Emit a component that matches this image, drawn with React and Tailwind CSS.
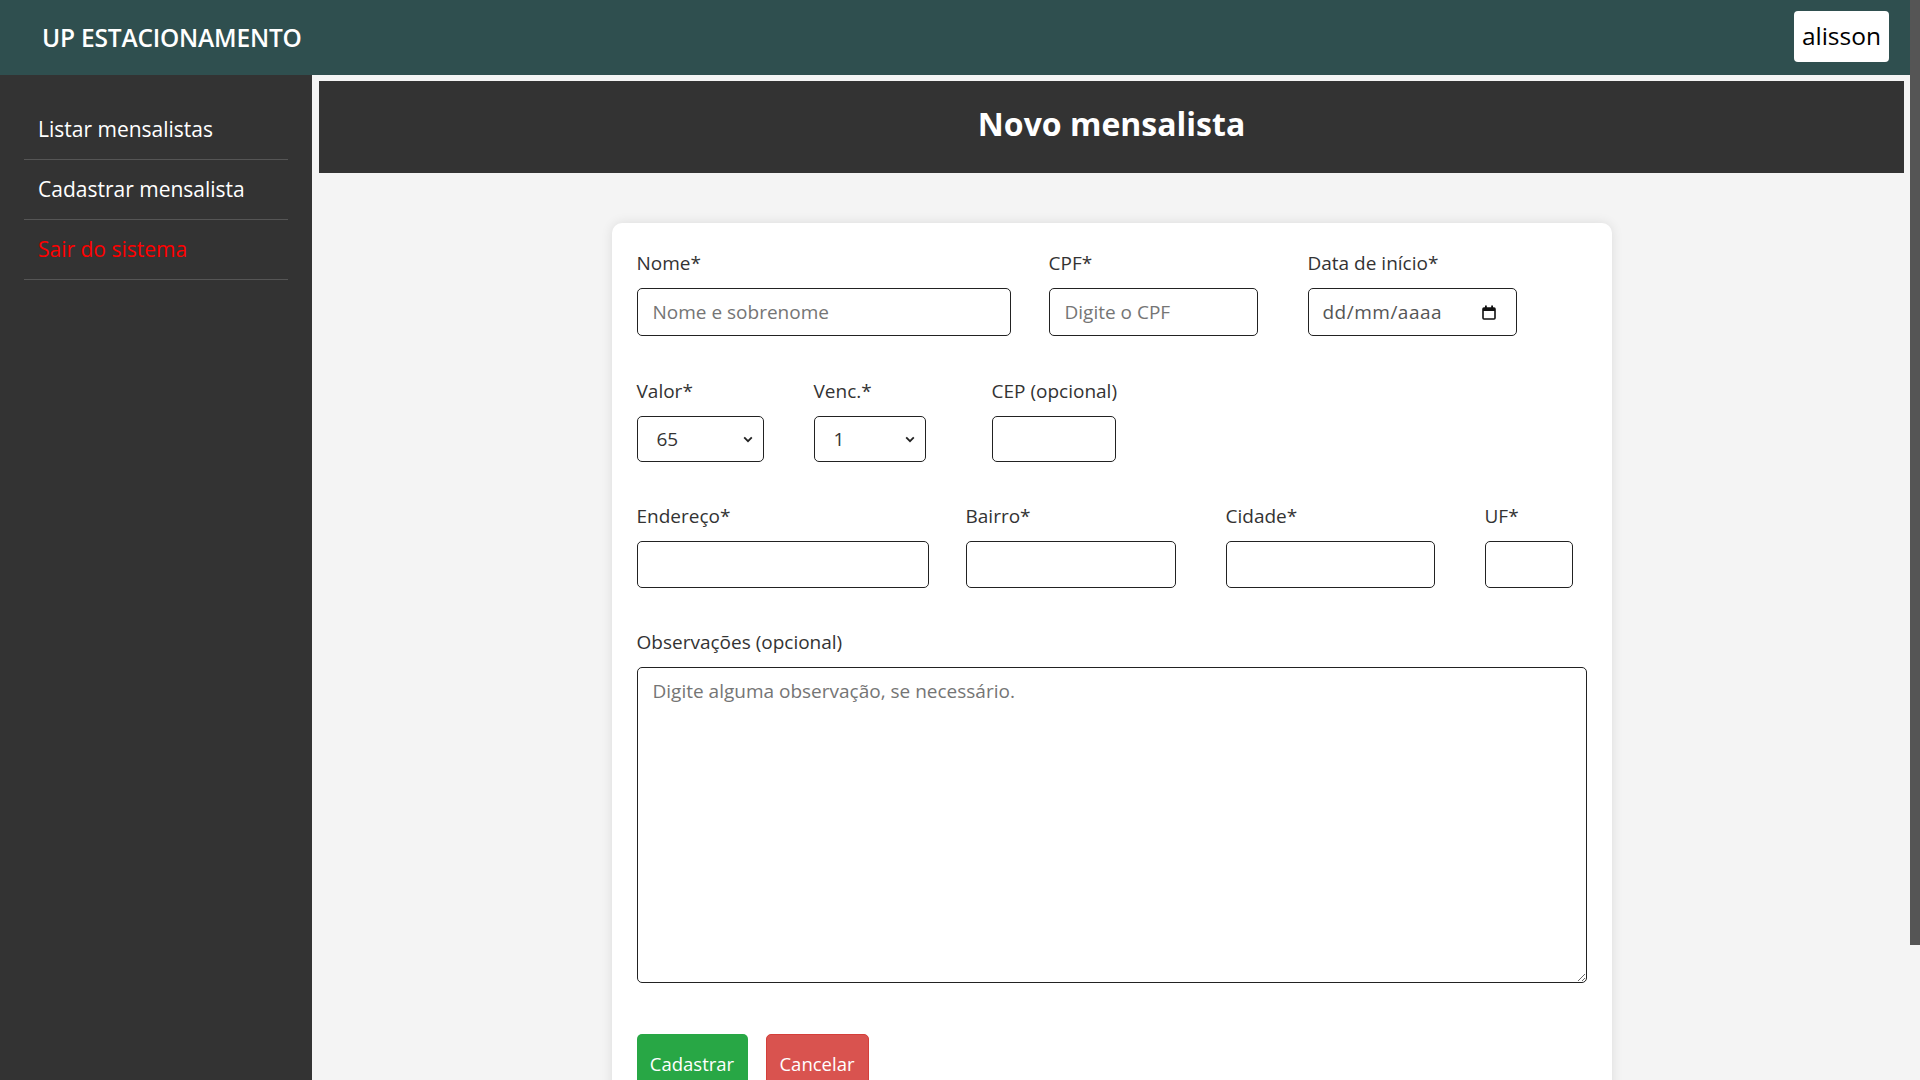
import { useState } from 'react'

const menu = [
  { label: 'Listar mensalistas', color: 'text-white' },
  { label: 'Cadastrar mensalista', color: 'text-white' },
  { label: 'Sair do sistema', color: 'text-[#ff0000]' },
]

function Label({ children }) {
  return <label className="block whitespace-nowrap text-[19px] leading-[27px] text-[#333] mb-[11px]">{children}</label>
}

function TextInput({ placeholder, className = '' }) {
  return (
    <input
      type="text"
      placeholder={placeholder}
      className={`block w-full border border-[#222] rounded-[5px] bg-white px-[15px] text-[19px] text-[#333] placeholder:text-[#757575] outline-none ${className}`}
    />
  )
}

function Chevron() {
  return (
    <svg width="10" height="7" viewBox="0 0 10 7" className="shrink-0">
      <path d="M1.2 1.4 L5 5.2 L8.8 1.4" fill="none" stroke="#222" strokeWidth="1.8" />
    </svg>
  )
}

function Select({ value }) {
  return (
    <div className="flex items-center justify-between h-[46px] border border-[#222] rounded-[5px] bg-white pl-[19px] pr-[10px] text-[19px] text-[#333]">
      <span>{value}</span>
      <Chevron />
    </div>
  )
}

function CalendarIcon() {
  return (
    <svg width="14" height="15" viewBox="0 0 14 15" className="shrink-0">
      <rect x="1" y="3" width="12" height="11" rx="1" fill="none" stroke="#111" strokeWidth="1.6" />
      <rect x="1" y="3" width="12" height="3" fill="#111" />
      <rect x="3" y="0.5" width="1.8" height="3" fill="#111" />
      <rect x="9.2" y="0.5" width="1.8" height="3" fill="#111" />
    </svg>
  )
}

export default function App() {
  const [obs, setObs] = useState('')

  return (
    <div className="h-screen overflow-hidden flex bg-[#f4f4f4] font-['Open_Sans',sans-serif]">
      <div className="flex-1 min-w-0 flex flex-col">
        {/* Header */}
        <header className="h-[75px] shrink-0 bg-[#2f4f4f] flex items-center justify-between pl-[42px] pr-[21px]">
          <h1 className="text-white text-[24.5px] font-semibold tracking-[-0.2px] mt-[1px]">UP ESTACIONAMENTO</h1>
          <div className="h-[51px] mb-[2px] px-[8px] bg-white rounded-[4px] flex items-center text-[24.5px] text-black">alisson</div>
        </header>

        <div className="flex flex-1">
          {/* Sidebar */}
          <aside className="w-[312px] shrink-0 bg-[#333] px-6 pt-[25px]">
            {menu.map((m) => (
              <a key={m.label} href="#" className={`flex items-center h-[60px] pl-[14px] border-b border-[#555] text-[21px] ${m.color}`}>
                {m.label}
              </a>
            ))}
          </aside>

          {/* Main */}
          <main className="flex-1 min-w-0 pt-[6px] pl-[7px] pr-[6px] pb-[60px]">
            <div className="h-[92px] bg-[#333] flex items-center justify-center pb-[6px]">
              <h2 className="text-white text-[32px] font-bold">Novo mensalista</h2>
            </div>

            <form className="mt-[50px] mx-auto w-[1000px] bg-white rounded-[10px] shadow-[0_0_12px_rgba(0,0,0,0.1)] px-[25px] pt-[27px] pb-[27px]">
              {/* Row 1 */}
              <div className="flex items-start mb-[42px]">
                <div className="w-[374px]">
                  <Label>Nome*</Label>
                  <TextInput placeholder="Nome e sobrenome" className="h-[48px]" />
                </div>
                <div className="w-[209px] ml-[38px]">
                  <Label>CPF*</Label>
                  <TextInput placeholder="Digite o CPF" className="h-[48px]" />
                </div>
                <div className="w-[209px] ml-[50px]">
                  <Label>Data de início*</Label>
                  <div className="flex items-center justify-between h-[48px] border border-[#222] rounded-[5px] bg-white pl-[14px] pr-[20px] text-[19px] text-[#555] tracking-[0.5px]">
                    <span>dd/mm/aaaa</span>
                    <CalendarIcon />
                  </div>
                </div>
              </div>

              {/* Row 2 */}
              <div className="flex items-start mb-[41px]">
                <div className="w-[127px]">
                  <Label>Valor*</Label>
                  <Select value="65" />
                </div>
                <div className="w-[112px] ml-[50px]">
                  <Label>Venc.*</Label>
                  <Select value="1" />
                </div>
                <div className="w-[124px] ml-[66px]">
                  <Label>CEP (opcional)</Label>
                  <TextInput className="h-[46px]" />
                </div>
              </div>

              {/* Row 3 */}
              <div className="flex items-start mb-[41px]">
                <div className="w-[292px]">
                  <Label>Endereço*</Label>
                  <TextInput className="h-[47px]" />
                </div>
                <div className="w-[210px] ml-[37px]">
                  <Label>Bairro*</Label>
                  <TextInput className="h-[47px]" />
                </div>
                <div className="w-[209px] ml-[50px]">
                  <Label>Cidade*</Label>
                  <TextInput className="h-[47px]" />
                </div>
                <div className="w-[88px] ml-[50px]">
                  <Label>UF*</Label>
                  <TextInput className="h-[47px]" />
                </div>
              </div>

              {/* Observações */}
              <div className="mb-[51px]">
                <Label>Observações (opcional)</Label>
                <textarea
                  value={obs}
                  onChange={(e) => setObs(e.target.value)}
                  placeholder="Digite alguma observação, se necessário."
                  className="block w-full h-[316px] border border-[#222] rounded-[5px] px-[15px] py-[10px] text-[19px] leading-[27px] text-[#333] placeholder:text-[#757575] outline-none"
                />
              </div>

              {/* Buttons */}
              <div className="flex gap-[18px]">
                <button type="button" className="w-[111px] py-[15px] leading-[27px] text-[18.5px] text-white bg-[#28a745] rounded-[5px]">
                  Cadastrar
                </button>
                <button type="button" className="w-[103px] py-[15px] leading-[27px] text-[18.5px] text-white bg-[#d9534f] border border-[#d43f3a] rounded-[5px]">
                  Cancelar
                </button>
              </div>
            </form>
          </main>
        </div>
      </div>

      {/* Page scrollbar */}
      <div className="w-[10px] shrink-0 bg-[#f4f4f4]">
        <div className="h-[945px] bg-[#555]" />
      </div>
    </div>
  )
}
